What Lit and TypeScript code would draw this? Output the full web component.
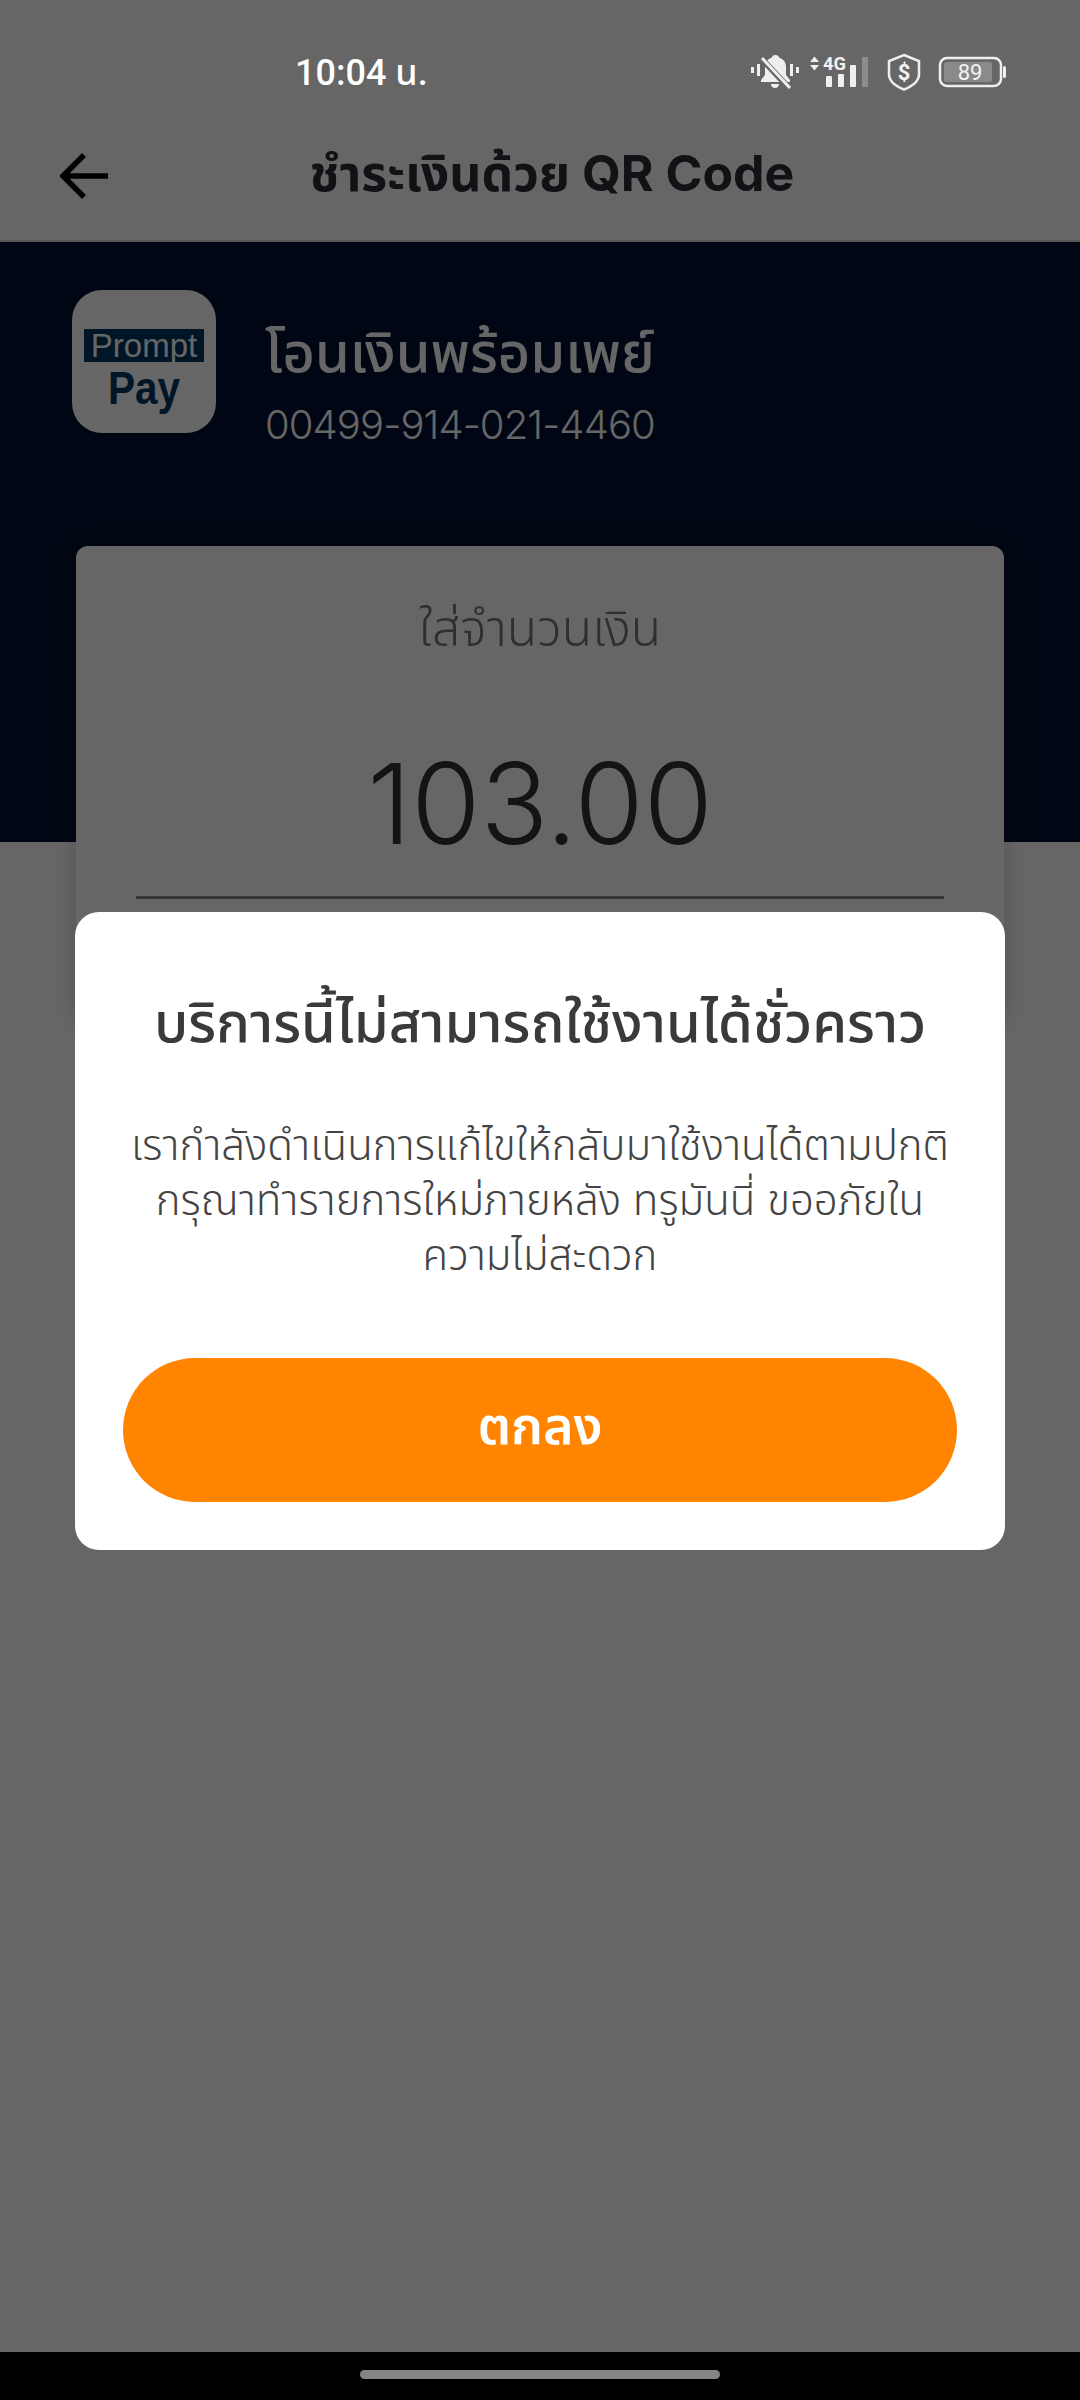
import { LitElement, html, css } from 'lit';
import { customElement } from 'lit/decorators.js';

@customElement('status-icons')
export class StatusIcons extends LitElement {
  static styles = css`
    :host { display: block; }
    svg { display: block; }
    .t { font-family: Roboto, sans-serif; fill: #f2f2f2; }
  `;

  render() {
    // viewBox is in screen pixels, starts at x=740
    return html`
      <svg width="280" height="50" viewBox="740 48 280 50" fill="none">
        <g fill="#efefef">
          <rect x="751" y="67" width="3" height="6"></rect>
          <rect x="757" y="64" width="3" height="12"></rect>
          <rect x="790" y="64" width="3" height="12"></rect>
          <rect x="796" y="67" width="3" height="6"></rect>
          <path d="M775 55c-1.700 0-3 1.200-3 2.600-4.500 1.400-7 5-7 9.400v8l-4 5v2h29v-2l-4-5v-8c0-4.400-2.500-8-7-9.400 0-1.400-1.300-2.600-4-2.600z"></path>
          <path d="M771 84h8c0 2.400-1.700 4-4 4s-4-1.600-4-4z"></path>
        </g>
        <path d="M759 56l30 32" stroke="#666" stroke-width="6"></path>
        <path d="M762 58l28 30" stroke="#efefef" stroke-width="3"></path>

        <path d="M810 62l4.500-5.500 4.500 5.500z M810 65h9l-4.500 5.500z" fill="#efefef"></path>
        <text class="t" x="823" y="70" font-size="18" font-weight="700" textLength="23" lengthAdjust="spacingAndGlyphs">4G</text>
        <rect x="826" y="76" width="6" height="11" rx="1" fill="#efefef"></rect>
        <rect x="838" y="74" width="6" height="13" rx="1" fill="#efefef"></rect>
        <rect x="850" y="65" width="6" height="22" rx="1" fill="#efefef"></rect>
        <rect x="862" y="57" width="6" height="30" rx="1" fill="#8c8c8c"></rect>

        <path d="M904 55l15 6v13c0 7-6 12-15 15.500-9-3.500-15-8.500-15-15.500V61z" stroke="#efefef" stroke-width="2.500"></path>
        <text class="t" x="904" y="80" font-size="22" font-weight="700" text-anchor="middle" fill="#e0e0e0">$</text>

        <rect x="940" y="58" width="61" height="28" rx="7" stroke="#efefef" stroke-width="2.500"></rect>
        <rect x="944" y="62" width="48" height="20" rx="2" fill="#8a8a8a"></rect>
        <rect x="1003" y="66" width="3" height="12" rx="1.500" fill="#efefef"></rect>
        <text class="t" x="970" y="80" font-size="22" text-anchor="middle">89</text>
      </svg>
    `;
  }
}

@customElement('promptpay-logo')
export class PromptpayLogo extends LitElement {
  static styles = css`
    :host {
      display: flex;
      flex-direction: column;
      align-items: center;
      width: 144px;
      height: 143px;
      background: #fff;
      border-radius: 30px;
      padding-top: 39px;
      box-sizing: border-box;
      font-family: "Liberation Sans", Arial, sans-serif;
      flex: none;
    }
    .band {
      width: 120px;
      height: 33px;
      background: #00365f;
      color: #fff;
      font-size: 33px;
      line-height: 33px;
      text-align: center;
      white-space: nowrap;
    }
    .pay {
      margin-top: 3px;
      color: #00365f;
      font-size: 46px;
      line-height: 46px;
      font-weight: 700;
      transform: scaleX(0.88);
    }
  `;

  render() {
    return html`<div class="band">Prompt</div><div class="pay">Pay</div>`;
  }
}

@customElement('app-root')
export class AppRoot extends LitElement {
  static styles = css`
    :host {
      display: block;
      position: relative;
      width: 1080px;
      height: 2400px;
      overflow: hidden;
      background: #fff;
      font-family: Inter, "Noto Sans Thai", "Noto Sans", Roboto, sans-serif;
    }
    .page {
      display: flex;
      flex-direction: column;
      height: 2352px;
    }
    .statusbar {
      position: relative;
      z-index: 3;
      display: flex;
      align-items: center;
      justify-content: space-between;
      height: 50px;
      padding: 48px 60px 0 295px;
    }
    .time {
      color: #fff;
      font: 500 36px/50px Roboto, "Noto Sans Thai", sans-serif;
    }
    .header {
      display: flex;
      align-items: center;
      height: 144px;
      box-sizing: border-box;
      padding-left: 60px;
      border-bottom: 2px solid #ddd;
    }
    .back { display: block; flex: none; margin-top: 14px; }
    .title {
      flex: 1;
      text-align: center;
      margin: 14px 108px 0 24px;
      font-size: 50px;
      font-weight: 700;
      color: #2b2e38;
    }
    .hero {
      height: 600px;
      background: #001030;
      padding: 48px 72px 0;
      box-sizing: border-box;
    }
    .bank {
      display: flex;
      align-items: flex-start;
      gap: 49px;
      height: 143px;
    }
    .bank-text { padding-top: 27px; }
    .bank-name {
      font-size: 56px;
      line-height: 70px;
      font-weight: 500;
      color: #fff;
    }
    .bank-no {
      font: 300 40px/76px Inter, sans-serif;
      letter-spacing: -0.9px;
      color: #fff;
    }
    .card {
      margin: 113px 4px 0;
      height: 420px;
      background: #fff;
      border-radius: 12px;
      box-shadow: 0 4px 24px rgba(0, 0, 0, 0.2);
      padding: 52px 60px 0;
      text-align: center;
    }
    .card-label {
      font-size: 50px;
      line-height: 60px;
      font-weight: 300;
      color: #777;
    }
    .amount {
      margin-top: 80px;
      font: 350 112px/130px Inter, sans-serif;
      color: #333;
    }
    .line {
      margin-top: 28px;
      height: 3px;
      background: #888;
    }
    .scrim {
      position: absolute;
      inset: 0;
      z-index: 1;
      background: rgba(0, 0, 0, 0.6);
      padding: 912px 75px 0;
    }
    .modal {
      height: 638px;
      box-sizing: border-box;
      background: #fff;
      border-radius: 24px;
      padding: 70px 48px 0;
      text-align: center;
      display: flex;
      flex-direction: column;
    }
    .modal h2 {
      margin: 0;
      font-size: 56px;
      line-height: 80px;
      font-weight: 500;
      color: #3a3a3a;
      white-space: nowrap;
    }
    .modal p {
      margin: 55px -8px 0;
      font-size: 42px;
      line-height: 55px;
      font-weight: 300;
      color: #444;
    }
    .ok {
      margin: auto 0 48px;
      height: 144px;
      padding: 0 0 4px;
      border: 0;
      border-radius: 72px;
      background: #ff8400;
      color: #fff;
      font: inherit;
      font-size: 52px;
      font-weight: 600;
    }
    .navbar {
      position: absolute;
      left: 0;
      right: 0;
      bottom: 0;
      z-index: 2;
      height: 48px;
      background: #000;
      display: flex;
      justify-content: center;
      padding-top: 18px;
      box-sizing: border-box;
    }
    .pill {
      width: 360px;
      height: 9px;
      border-radius: 5px;
      background: #858585;
    }
  `;

  render() {
    return html`
      <div class="page">
        <div class="statusbar">
          <span class="time">10:04 น.</span>
          <status-icons></status-icons>
        </div>
        <div class="header">
          <svg class="back" width="48" height="48" viewBox="0 0 48 48" fill="none" stroke="#000" stroke-width="5.500">
            <path d="M48 24H3M24 3L3 24l21 21"></path>
          </svg>
          <div class="title">ชำระเงินด้วย QR Code</div>
        </div>
        <div class="hero">
          <div class="bank">
            <promptpay-logo></promptpay-logo>
            <div class="bank-text">
              <div class="bank-name">โอนเงินพร้อมเพย์</div>
              <div class="bank-no">00499-914-021-4460</div>
            </div>
          </div>
          <div class="card">
            <div class="card-label">ใส่จำนวนเงิน</div>
            <div class="amount">103.00</div>
            <div class="line"></div>
          </div>
        </div>
      </div>
      <div class="scrim">
        <div class="modal">
          <h2>บริการนี้ไม่สามารถใช้งานได้ชั่วคราว</h2>
          <p>เรากำลังดำเนินการแก้ไขให้กลับมาใช้งานได้ตามปกติ<br>กรุณาทำรายการใหม่ภายหลัง ทรูมันนี่ ขออภัยใน<br>ความไม่สะดวก</p>
          <button class="ok">ตกลง</button>
        </div>
      </div>
      <div class="navbar"><div class="pill"></div></div>
    `;
  }
}
